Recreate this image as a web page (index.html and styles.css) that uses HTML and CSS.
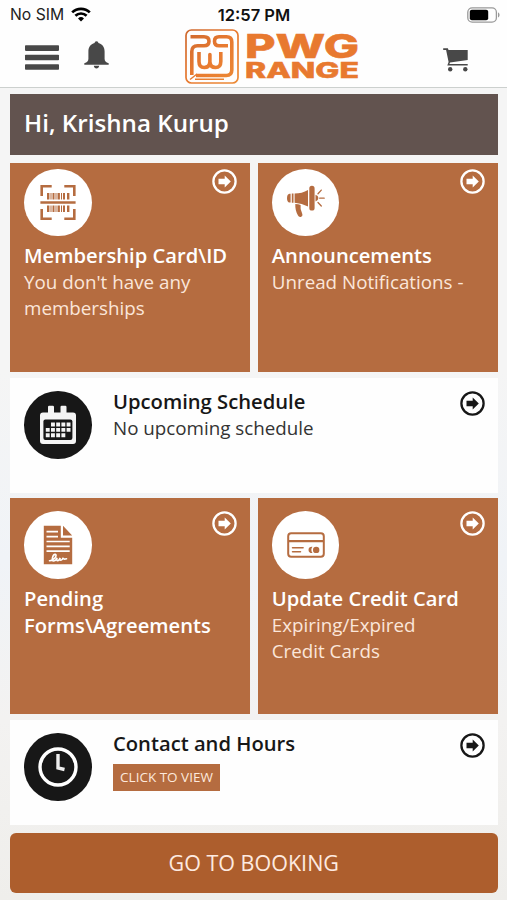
FILE: index.html
```
<!DOCTYPE html>
<html lang="en">
<head>
    <meta charset="UTF-8">
    <meta name="viewport" content="width=device-width, initial-scale=1.0">
    <title>PWG Range</title>
    <link rel="stylesheet" href="styles.css">
</head>
<body>

<svg class="defs" width="0" height="0">
    <symbol id="arrow" viewBox="0 0 25 25">
        <circle cx="12.5" cy="12.5" r="11.1" fill="none" stroke="currentColor" stroke-width="2.3"/>
        <path fill="currentColor" d="M6.5 9.8h6.2V6.4l6.1 6.1-6.1 6.1v-3.400H6.500z"/>
    </symbol>
</svg>

<header class="header">
    <div class="status">
        <div class="carrier">
            <span>No SIM</span>
            <svg width="20" height="15" viewBox="0 0 20 15">
                <g fill="none" stroke="#000" stroke-width="2.7">
                    <path d="M1.2 5.4a12.6 12.6 0 0 1 17.6 0"/>
                    <path d="M4.4 8.8a8 8 0 0 1 11.2 0"/>
                </g>
                <path d="M10 14.4l-3-3a4.4 4.4 0 0 1 6 0z"/>
            </svg>
        </div>
        <div class="time">12:57 PM</div>
        <svg class="battery" width="33" height="16" viewBox="0 0 33 16">
            <rect x=".8" y=".8" width="28.6" height="14.4" rx="4.4" fill="none" stroke="#999" stroke-width="1.3"/>
            <rect x="2.8" y="2.8" width="18.4" height="10.4" rx="2"/>
            <path d="M31 5.6c2 .6 2 4.2 0 4.8z" fill="#999"/>
        </svg>
    </div>
    <div class="navbar">
        <div class="nav-left">
            <svg width="34" height="26" viewBox="0 0 34 26" fill="#484848">
                <rect width="34" height="5.6" rx=".8" y=".3"/>
                <rect width="34" height="5.6" rx=".8" y="9.7"/>
                <rect width="34" height="5.6" rx=".8" y="19.2"/>
            </svg>
            <svg class="bell" width="25" height="28" viewBox="0 0 25 28" fill="#484848">
                <path d="M12.5.2c1.2 0 1.9.8 1.9 1.9 4 1 6.2 4.2 6.2 8.4v7.2c0 2.2 1.2 3.5 4.1 4.600v1.400H.3v-1.400c2.900-1.100 4.100-2.400 4.100-4.600v-7.200c0-4.200 2.200-7.400 6.200-8.400 0-1.100.7-1.900 1.900-1.900z"/>
                <path d="M9.8 24.800h5.400c-.3 1.700-1.300 2.600-2.700 2.600s-2.400-.9-2.700-2.600z"/>
            </svg>
        </div>
        <svg class="logo" width="176" height="56" viewBox="0 0 176 56">
            <defs>
                <linearGradient id="rust" gradientUnits="userSpaceOnUse" x1="0" y1="0" x2="54" y2="54">
                    <stop offset="0" stop-color="#cd682f"/>
                    <stop offset=".5" stop-color="#e87a30"/>
                    <stop offset="1" stop-color="#ec8b36"/>
                </linearGradient>
            </defs>
            <g fill="none" stroke="url(#rust)" stroke-linejoin="round">
                <rect x="1" y="1" width="52" height="53" rx="5.5" stroke-width="1.7"/>
                <path stroke-width="3.600" d="M5.500 7.800h13.500q5 0 5 4.500t-5 4.500H12.500q-5.700 0-5.700 5.700V46"/>
                <path stroke-width="3.600" d="M43 16.800H34q-4.500 0-4.500-4.500t4.500-4.500h7.500q5.300 0 5.300 5.200v28q0 5.500-5.500 5.500H11"/>
                <path stroke-width="3.600" d="M14 23v9.500q0 6 5.200 6t5.700-5.500V25.500v7.500q.5 5.500 5.700 5.500t5.200-6V23"/>
                <path stroke-width="1.500" d="M5 50.500l7-5.500M10 50.300h29"/>
            </g>
            <g class="logo-text">
                <text x="60" y="29" font-size="33" textLength="114" lengthAdjust="spacingAndGlyphs">PWG</text>
                <text x="60" y="49" font-size="21" textLength="114" lengthAdjust="spacingAndGlyphs">RANGE</text>
            </g>
        </svg>
        <svg class="cart" width="26" height="24" viewBox="0 0 26 24" fill="#484848">
            <path d="M.2.3h4.700l.6 1.700h19.200v10L7 14.600l-.6 1.400h18.300v1.400H4.300l1.300-3.300L3.100 2H.2z"/>
            <circle cx="7.200" cy="21.200" r="2.200"/>
            <circle cx="22.300" cy="21.200" r="2.200"/>
        </svg>
    </div>
</header>

<main class="content">
    <h1 class="greeting">Hi, Krishna Kurup</h1>

    <div class="row">
        <div class="tile">
            <div class="tile-top">
                <div class="icon">
                    <svg width="36" height="36" viewBox="0 0 36 36">
                        <path fill="none" stroke="#b56c40" stroke-width="2.6" d="M1.700 12V2.300h10M24.300 2.300h10V12M1.700 25v9.700h10M24.300 34.700h10V25"/>
                        <path fill="#b56c40" d="M.4 17.200h35.200v2.500H.4z"/>
                        <path fill="#b56c40" d="M7 9h2.400v6.500H7zM10.500 9h1v6.500h-1zM12.500 9h2v6.500h-2zM15.500 9h1v6.500h-1zM17.500 9h2.400v6.500h-2.400zM21 9h1v6.500h-1zM23 9h2v6.500h-2zM27 9h2.400v6.500H27zM7 21.500h2.400V28H7zM10.500 21.500h1V28h-1zM12.500 21.500h2V28h-2zM15.500 21.500h1V28h-1zM17.500 21.500h2.400V28h-2.400zM21 21.500h1V28h-1zM23 21.500h2V28h-2zM27 21.500h2.400V28H27z"/>
                    </svg>
                </div>
                <svg class="arrow"><use href="#arrow"/></svg>
            </div>
            <h2>Membership Card\ID</h2>
            <p>You don't have any memberships</p>
        </div>
        <div class="tile">
            <div class="tile-top">
                <div class="icon">
                    <svg width="40" height="34" viewBox="0 0 40 34" fill="#b56c40">
                        <path d="M4.600 8.800v8.700H3.500Q1 17.200 1 13.200t2.500-4.400zM5.800 8.600h1.700v9.100H5.800zM8.600 8.600Q16 8.500 22 5v16.500q-6-3.300-13.400-3.800z"/>
                        <rect x="23.300" y=".8" width="5.300" height="24.800" rx="2.600"/>
                        <path d="M29.500 9.800q2.900.8 2.900 3.300t-2.900 3.400z"/>
                        <path d="M9.300 19.100q3.400.1 5.300 1-.8 4.300 1.800 9.200.5 2-1.600 2.600-2 .4-2.800-1.300-3-5-2.700-11.500z"/>
                        <path fill="none" stroke="#b56c40" stroke-width="1.300" stroke-linecap="round" d="M32 8.800l3.300-3.700M33.700 13.200h4.500M32 17.500l3.300 3.500"/>
                    </svg>
                </div>
                <svg class="arrow"><use href="#arrow"/></svg>
            </div>
            <h2>Announcements</h2>
            <p>Unread Notifications -</p>
        </div>
    </div>

    <div class="card schedule">
        <div class="icon dark">
            <svg width="38" height="40" viewBox="0 0 38 40">
                <path fill="#f4f4f4" d="M4 7.500h5V2q0-1.200 1.200-1.200h3.600Q15 .8 15 2v5.500h6.500V2q0-1.200 1.200-1.200h3.600q1.200 0 1.200 1.200v5.500H34q3 0 3 3V36q0 3-3 3H4q-3 0-3-3V10.500q0-3 3-3z"/>
                <rect x="4.400" y="14.400" width="29" height="20.600" rx="2" fill="#171717"/>
                <g fill="#f4f4f4">
                    <path d="M12 17.500h3.900v3.900H12zM17.200 17.500h3.900v3.900h-3.900zM22.400 17.500h3.900v3.900h-3.900zM27.600 17.500h3.900v3.900h-3.900z"/>
                    <path d="M6.800 22.900h3.900v3.900H6.800zM12 22.900h3.900v3.900H12zM17.200 22.900h3.900v3.900h-3.900zM22.400 22.900h3.900v3.900h-3.900zM27.600 22.900h3.900v3.900h-3.900z"/>
                    <path d="M6.800 28.300h3.900v3.900H6.800zM12 28.300h3.900v3.900H12zM17.200 28.300h3.900v3.900h-3.900zM22.400 28.300h3.900v3.900h-3.900z"/>
                </g>
            </svg>
        </div>
        <div class="card-body">
            <h2>Upcoming Schedule</h2>
            <p>No upcoming schedule</p>
        </div>
        <svg class="arrow"><use href="#arrow"/></svg>
    </div>

    <div class="row row-forms">
        <div class="tile">
            <div class="tile-top">
                <div class="icon">
                    <svg width="30" height="40" viewBox="0 0 30 40">
                        <path fill="#b56c40" d="M.8.8h17v12h11.400V39.200H.8zM20 .8l9.200 9.800H20z"/>
                        <path stroke="#fff" stroke-width="1.700" d="M3.500 6.700h11.500M3.500 11.600h11.500M3.500 16.500h23.200M3.500 21.300h23.200M3.500 26.100h23.200"/>
                        <path fill="none" stroke="#fff" stroke-width="1.600" stroke-linecap="round" d="M6.500 35.800q3 .2 5.500-3 2-3 .3-3.400-2-.2-2.800 3.200-.8 3.500 1.200 3.400 2.200-.4 3.300-3.300-.7 3.100.7 3 1.500-.3 2.400-2.800-.5 2.500.8 2.400 1.400-.2 2.200-2.500 0 2 3.400 1"/>
                    </svg>
                </div>
                <svg class="arrow"><use href="#arrow"/></svg>
            </div>
            <h2>Pending Forms\Agreements</h2>
        </div>
        <div class="tile">
            <div class="tile-top">
                <div class="icon">
                    <svg width="38" height="26" viewBox="0 0 38 26">
                        <g fill="none" stroke="#b56c40">
                            <rect x="1.200" y="1.200" width="35.600" height="23.600" rx="3" stroke-width="2"/>
                            <path stroke-width="2.200" d="M1.500 9.100h35"/>
                            <path stroke-width="1.500" stroke-linecap="round" d="M5.500 15.700h10.600M5.500 19.800h8"/>
                        </g>
                        <path fill="#b56c40" d="M25.500 14.800a3.200 3.200 0 1 0 0 6.200q-2.300-3.100 0-6.200z"/>
                        <circle cx="29.200" cy="17.900" r="3.200" fill="#b56c40"/>
                    </svg>
                </div>
                <svg class="arrow"><use href="#arrow"/></svg>
            </div>
            <h2>Update Credit Card</h2>
            <p>Expiring/Expired Credit&nbsp;Cards</p>
        </div>
    </div>

    <div class="card contact">
        <div class="icon dark">
            <svg width="40" height="40" viewBox="0 0 40 40" fill="none" stroke="#fff">
                <circle cx="20" cy="20" r="18" stroke-width="3.400"/>
                <path stroke-width="3.400" stroke="#eee" d="M20 7v14l6.500 1.500"/>
            </svg>
        </div>
        <div class="card-body">
            <h2>Contact and Hours</h2>
            <button type="button" class="view-btn">CLICK TO VIEW</button>
        </div>
        <svg class="arrow"><use href="#arrow"/></svg>
    </div>

    <button type="button" class="booking-btn">GO TO BOOKING</button>
</main>

</body>
</html>
```

FILE: styles.css
```
* {
    box-sizing: border-box;
}
body {
    margin: 0;
    height: 900px;
    overflow: hidden;
    font-family: "Open Sans", "Noto Sans", sans-serif;
    background: linear-gradient(#f5f5f5 0, #f5f5f5 370px, #f0f3f7 560px, #f3f2f1 720px, #efeeeb 900px);
}
h1, h2, p {
    margin: 0;
}
svg {
    display: block;
    flex: none;
    overflow: visible;
}
.defs {
    display: none;
}
.header {
    height: 88px;
    background: #fefefe;
    border-bottom: 1px solid #ccd0ce;
}
.status {
    display: grid;
    grid-template-columns: 1fr auto 1fr;
    align-items: center;
    height: 29px;
    padding: 0 7px 0 10px;
    font-family: Inter, sans-serif;
    font-size: 15.7px;
    color: #222;
}
.carrier {
    display: flex;
    align-items: center;
    gap: 7px;
}
.time {
    font-weight: 600;
    font-size: 16.5px;
    color: #111;
    padding-right: 2px;
}
.battery {
    justify-self: end;
}
.navbar {
    display: grid;
    grid-template-columns: 160px 176px 1fr;
    align-items: start;
    padding: 0 38px 0 25px;
}
.nav-left {
    display: flex;
    gap: 25px;
    padding-top: 16px;
}
.bell {
    margin-top: -4px;
}
.logo-text {
    font-family: Inter, sans-serif;
    font-weight: 800;
    fill: #e8792f;
    stroke: #e8792f;
    stroke-width: .5px;
}
.cart {
    justify-self: end;
    margin-top: 19px;
}
.content {
    padding: 6px 9.500px 0 10px;
}
.greeting {
    height: 60.5px;
    padding-left: 14px;
    background: #62534f;
    color: #fff;
    font-size: 24.2px;
    font-weight: 600;
    line-height: 57px;
}
.row {
    display: grid;
    grid-template-columns: 1fr 1fr;
    gap: 8px;
    height: 209px;
    margin-top: 8px;
}
.tile {
    padding: 6px 13px 0 14px;
    background: #b56c40;
    color: #fff;
}
.tile-top {
    display: flex;
    justify-content: space-between;
    align-items: flex-start;
    margin-bottom: 6px;
}
.row-forms {
    height: 216px;
    margin-top: 5px;
}
.row-forms .tile {
    padding-top: 13.5px;
}
.icon {
    display: flex;
    flex: none;
    align-items: center;
    justify-content: center;
    width: 67.5px;
    height: 67.5px;
    border-radius: 50%;
    background: #fff;
}
.icon.dark {
    background: #171717;
}
.arrow {
    width: 25px;
    height: 25px;
}
h2 {
    font-size: 20.2px;
    font-weight: 600;
    line-height: 27px;
}
p {
    font-size: 18.8px;
    line-height: 26px;
}
.tile p {
    color: #fbe6da;
}
.card {
    display: flex;
    align-items: flex-start;
    padding: 13.5px 13px 0 14px;
    background: #fefefe;
    color: #171717;
}
.card-body {
    flex: 1;
    padding-left: 21.5px;
    margin-top: -3.5px;
}
.card p {
    color: #333;
}
.schedule {
    height: 115px;
    margin-top: 6px;
}
.contact {
    height: 105px;
    margin-top: 6px;
}
.view-btn {
    display: block;
    width: 107px;
    height: 27px;
    margin-top: 7px;
    padding: 0;
    border: none;
    background: #b56c40;
    color: #fde9dd;
    font-family: inherit;
    font-size: 13.5px;
}
.booking-btn {
    display: block;
    width: 100%;
    height: 60.5px;
    margin-top: 8px;
    padding: 0;
    border: none;
    border-radius: 6px;
    background: #ad5e2d;
    color: #fdeae0;
    font-family: inherit;
    font-size: 21.5px;
}
```
